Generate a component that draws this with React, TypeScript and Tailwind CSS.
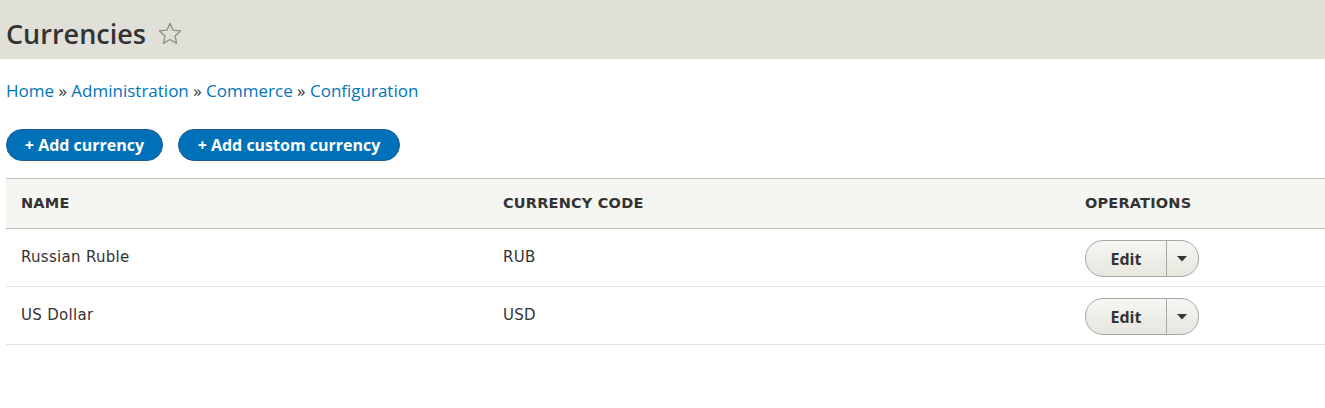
import React from "react";

const dejavu = { fontFamily: '"DejaVu Sans", "Noto Sans", sans-serif' };
const open = { fontFamily: '"Open Sans", "Noto Sans", sans-serif' };

function Star() {
  return (
    <svg width="26" height="26" viewBox="0 0 24 24" className="ml-[11px] mt-[1px]">
      <path
        d="M12 2.2l2.9 6.3 6.8.7-5.1 4.6 1.5 6.8L12 17.1l-6.1 3.5 1.5-6.8-5.1-4.6 6.8-.7z"
        fill="none"
        stroke="#8e8e83"
        strokeWidth="1.2"
        strokeLinejoin="round"
      />
    </svg>
  );
}

function DropButton() {
  return (
    <div className="flex h-[37px] w-[114px] rounded-[18px] border border-[#a6a6a6] bg-gradient-to-b from-[#f6f6f3] to-[#e7e7df] overflow-hidden">
      <div className="flex w-[81px] items-center justify-center border-r border-[#a6a6a6] text-[16px] font-bold text-[#333]" style={open}>
        Edit
      </div>
      <div className="flex flex-1 items-center justify-center pr-[2px]">
        <svg width="10" height="6" viewBox="0 0 10 6">
          <path d="M0 0h10L5 5.5z" fill="#333" />
        </svg>
      </div>
    </div>
  );
}

export default function App() {
  const rows = [
    { name: "Russian Ruble", code: "RUB" },
    { name: "US Dollar", code: "USD" },
  ];
  return (
    <div className="w-[1325px] h-[408px] bg-white text-[#333]" style={dejavu}>
      <div className="h-[59px] bg-[#e0e0d8] flex items-center pl-[6px] pt-[7px]">
        <h1 className="text-[27px] font-semibold text-[#333] leading-none" style={open}>
          Currencies
        </h1>
        <Star />
      </div>
      <div className="pl-[6px] pt-[20px] text-[17px] text-[#0074bd] leading-[24px]" style={open}>
        <span>Home</span> <span className="text-[#333]">»</span> <span>Administration</span>{" "}
        <span className="text-[#333]">»</span> <span>Commerce</span> <span className="text-[#333]">»</span>{" "}
        <span>Configuration</span>
      </div>
      <div className="flex gap-[15px] pl-[6px] pt-[26px]" style={open}>
        <div className="flex h-[32px] w-[157px] items-center justify-center rounded-[16px] border border-[#1e5c90] bg-[#0071b8] text-[16px] font-bold text-white">
          + Add currency
        </div>
        <div className="flex h-[32px] w-[222px] items-center justify-center rounded-[16px] border border-[#1e5c90] bg-[#0071b8] text-[16px] font-bold text-white">
          + Add custom currency
        </div>
      </div>
      <div className="ml-[6px] mt-[17px]">
        <div className="flex h-[51px] items-center border-y border-[#bfbfba] bg-[#f5f5f2] text-[14.5px] font-bold uppercase text-[#333] tracking-[0.2px]">
          <div className="w-[497px] pl-[15px]">Name</div>
          <div className="w-[582px]">Currency code</div>
          <div>Operations</div>
        </div>
        {rows.map((r) => (
          <div key={r.code} className="flex h-[58px] items-center border-b border-[#e6e4df] text-[15px] tracking-[0.3px] text-[#333]">
            <div className="w-[497px] pl-[15px]">{r.name}</div>
            <div className="w-[582px]">{r.code}</div>
            <div className="pt-[2px] tracking-normal">
              <DropButton />
            </div>
          </div>
        ))}
      </div>
    </div>
  );
}
